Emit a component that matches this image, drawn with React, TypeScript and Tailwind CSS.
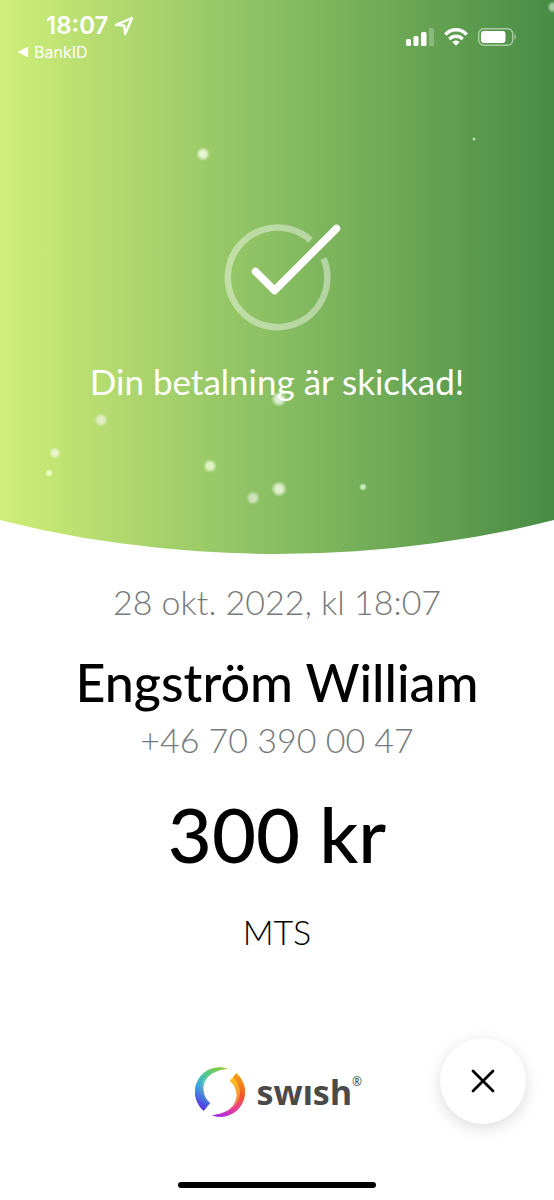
interface Spark {
  x: number;
  y: number;
  r: number;
  color: string;
}

const sparks: Spark[] = [
  { x: 203, y: 154, r: 7, color: '#e6f4d2' },
  { x: 474, y: 139, r: 2, color: '#b9e0b0' },
  { x: 553, y: 7, r: 6, color: '#a3cba2' },
  { x: 279, y: 399, r: 8, color: '#dcedd0' },
  { x: 101, y: 420, r: 7, color: '#e2edc4' },
  { x: 55, y: 453, r: 6, color: '#e9f4c8' },
  { x: 49, y: 473, r: 4, color: '#eaffc0' },
  { x: 210, y: 466, r: 7, color: '#dcf2c2' },
  { x: 253, y: 498, r: 7, color: '#cfe4bd' },
  { x: 279, y: 489, r: 8, color: '#dfeecb' },
  { x: 363, y: 487, r: 4, color: '#c4ecb8' },
];

function Sparks() {
  return (
    <svg
      className="absolute inset-0 w-full h-full"
      viewBox="0 0 554 554"
      preserveAspectRatio="xMidYMid slice"
      aria-hidden="true"
    >
      <defs>
        {sparks.map((s, i) => (
          <radialGradient key={i} id={`spark-${i}`}>
            <stop offset="0.45" stopColor={s.color} />
            <stop offset="1" stopColor={s.color} stopOpacity="0" />
          </radialGradient>
        ))}
      </defs>
      {sparks.map((s, i) => (
        <circle key={i} cx={s.x} cy={s.y} r={s.r} fill={`url(#spark-${i})`} />
      ))}
    </svg>
  );
}

function StatusBar() {
  return (
    <div className="flex items-start justify-between pl-4 pr-[38px] pt-3 font-['Inter',sans-serif]">
      <div>
        <div className="flex items-center gap-1.5 pl-[30px] text-2xl leading-7 font-semibold">
          <span>18:07</span>
          <svg className="w-5 h-5" viewBox="0 0 20 20" fill="none" stroke="currentColor" aria-hidden="true">
            <path d="M18 2 2 8.9 10.2 9.8 11.2 18Z" strokeWidth="2.4" strokeLinejoin="round" />
          </svg>
        </div>
        <a href="#bankid" className="flex items-center gap-1 text-base leading-6">
          <svg className="w-3.5 h-3" viewBox="0 0 14 12" fill="currentColor" aria-hidden="true">
            <path d="M1.5 6 12 .8V11.2Z" />
          </svg>
          BankID
        </a>
      </div>
      <div className="flex items-center gap-2.5 pt-4">
        <svg className="w-7 h-[18px]" viewBox="0 0 28 18" fill="currentColor" aria-label="Signal">
          <rect x="0" y="11" width="5" height="7" rx="1.5" />
          <rect x="7.5" y="8" width="5" height="10" rx="1.5" />
          <rect x="15" y="4" width="5.5" height="14" rx="1.5" />
          <rect x="23" y="0" width="5" height="18" rx="1.5" opacity="0.25" />
        </svg>
        <svg className="w-6 h-[18px]" viewBox="0 0 24 18" fill="none" stroke="currentColor" strokeWidth="3.4" aria-label="Wi-Fi">
          <path d="M1.3 6.6C7.3.1 16.7.1 22.7 6.6" />
          <path d="M5.3 11.1c3.8-3.8 9.6-3.8 13.4 0" />
          <path d="M12 17.8 8.3 14.1c2.1-2 5.3-2 7.4 0Z" fill="currentColor" stroke="none" />
        </svg>
        <svg className="w-[38px] h-[18px]" viewBox="0 0 38 18" aria-label="Battery">
          <rect x="0.7" y="0.7" width="34" height="16.6" rx="5" fill="none" stroke="#fff" strokeWidth="1.4" opacity="0.5" />
          <rect x="3" y="3" width="24.5" height="12" rx="3" fill="#fff" />
          <path d="M36.4 6v6c1.9-.9 1.9-5.1 0-6Z" fill="#fff" opacity="0.5" />
        </svg>
      </div>
    </div>
  );
}

function CheckIcon() {
  return (
    <svg className="w-[138px] h-28" viewBox="-4 0 138 112" fill="none" aria-hidden="true">
      <path d="M98.7 19.2A49.8 49.8 0 1 0 111.6 37.4" stroke="#fff" strokeOpacity="0.42" strokeWidth="6.5" />
      <path d="M43.5 50.5 62.5 69.5 124.5 7.5" stroke="#fff" strokeWidth="7.5" strokeLinecap="round" strokeLinejoin="round" />
    </svg>
  );
}

function SwishLogo() {
  return (
    <div className="flex items-center gap-3">
      <svg className="w-[50px] h-[50px]" viewBox="0 0 150 150" aria-hidden="true">
        <defs>
          <linearGradient id="cool" x1="90" y1="5" x2="25" y2="128" gradientUnits="userSpaceOnUse">
            <stop offset="0" stopColor="#8fce3f" />
            <stop offset="0.28" stopColor="#4fc98a" />
            <stop offset="0.6" stopColor="#3aa5e6" />
            <stop offset="1" stopColor="#5a2fe0" />
          </linearGradient>
          <linearGradient id="coolInner" x1="90" y1="5" x2="30" y2="120" gradientUnits="userSpaceOnUse">
            <stop offset="0" stopColor="#c5dc3a" />
            <stop offset="0.45" stopColor="#67d4b4" />
            <stop offset="1" stopColor="#3c50e8" />
          </linearGradient>
          <linearGradient id="warm" x1="125" y1="20" x2="60" y2="148" gradientUnits="userSpaceOnUse">
            <stop offset="0" stopColor="#f9a01b" />
            <stop offset="0.35" stopColor="#f2592a" />
            <stop offset="0.65" stopColor="#ee3f90" />
            <stop offset="1" stopColor="#a22be8" />
          </linearGradient>
          <linearGradient id="warmInner" x1="115" y1="30" x2="60" y2="145" gradientUnits="userSpaceOnUse">
            <stop offset="0" stopColor="#fcc419" />
            <stop offset="0.45" stopColor="#f68a3c" />
            <stop offset="0.75" stopColor="#ef5bc0" />
            <stop offset="1" stopColor="#b02bea" />
          </linearGradient>
        </defs>
        <path d="M99 5A74 74 0 0 0 26 131L46 108C12 82 14 14 99 5Z" fill="url(#coolInner)" />
        <path d="M99 5A74 74 0 0 0 26 131L35 120C-2 82 10 14 99 5Z" fill="url(#cool)" />
        <path d="M51 145A74 74 0 0 0 124 19L104 42C138 68 136 136 51 145Z" fill="url(#warmInner)" />
        <path d="M51 145A74 74 0 0 0 124 19L115 30C152 68 140 136 51 145Z" fill="url(#warm)" />
      </svg>
      <div className="flex items-start text-[#4a4a4a]">
        <span className="font-['Noto_Sans',sans-serif] text-[34px] leading-10 font-bold" aria-label="swish">
          swısh
        </span>
        <span className="pt-0.5 font-['Noto_Sans',sans-serif] text-xs leading-4">®</span>
      </div>
    </div>
  );
}

export default function App() {
  return (
    <main className="flex flex-col min-h-screen bg-white text-black font-['Lato',sans-serif]">
      <header className="relative h-[554px] bg-linear-to-r from-[#cfee78] via-[#89be62] to-[#478c45] text-white [clip-path:ellipse(145%_100%_at_50%_0)]">
        <Sparks />
        <div className="relative flex flex-col">
          <StatusBar />
          <div className="flex flex-col items-center pt-[157px]">
            <CheckIcon />
            <h1 className="pt-7 text-[35px] leading-10">Din betalning är skickad!</h1>
          </div>
        </div>
      </header>

      <section className="flex flex-col items-center pt-7 text-center">
        <time dateTime="2022-10-28T18:07" className="text-[34px] leading-10 font-light text-[#77797c]">
          28 okt. 2022, kl 18:07
        </time>
        <h2 className="pt-[30px] text-[52px] leading-[60px] font-medium">Engström William</h2>
        <p className="pt-2 text-[34px] leading-10 font-light text-[#77797c]">+46 70 390 00 47</p>
        <p className="pt-8 text-[76px] leading-[84px] font-medium">300 kr</p>
        <p className="pt-9 text-[34px] leading-10 font-light">MTS</p>
      </section>

      <footer className="mt-auto flex flex-col items-center">
        <div className="flex w-full items-center justify-end gap-[78px] pr-7">
          <div className="pt-[22px]">
            <SwishLogo />
          </div>
          <button
            type="button"
            aria-label="Stäng"
            className="flex h-[86px] w-[86px] shrink-0 items-center justify-center rounded-full bg-white shadow-[0_4px_16px_rgba(0,0,0,0.14)]"
          >
            <svg className="w-6 h-6" viewBox="0 0 24 24" fill="none" stroke="currentColor" strokeWidth="2.8" strokeLinecap="round" aria-hidden="true">
              <path d="M2 2 22 22M22 2 2 22" />
            </svg>
          </button>
        </div>
        <div className="mt-[58px] mb-3 h-1.5 w-[198px] rounded-full bg-black" />
      </footer>
    </main>
  );
}
